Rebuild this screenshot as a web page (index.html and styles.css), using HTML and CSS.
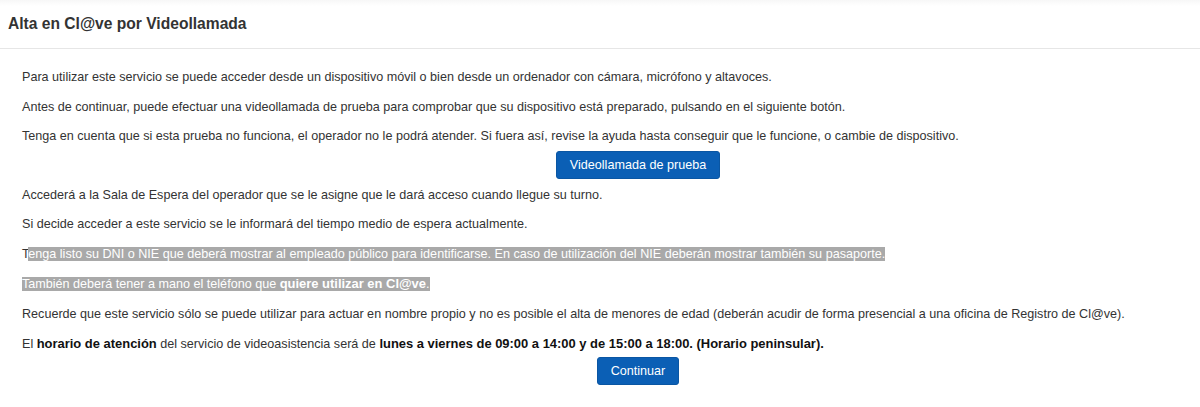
FILE: index.html
```html
<!DOCTYPE html>
<html lang="es">
<head>
    <meta charset="UTF-8">
    <meta name="viewport" content="width=device-width, initial-scale=1.0">
    <title>Alta en Cl@ve por Videollamada</title>
    <link rel="stylesheet" href="styles.css">
</head>
<body>
    <div class="panel">
        <div class="panel-heading">
            <h1>Alta en Cl@ve por Videollamada</h1>
        </div>
        <div class="panel-body">
            <p>Para utilizar este servicio se puede acceder desde un dispositivo móvil o bien desde un ordenador con cámara, micrófono y altavoces.</p>
            <p>Antes de continuar, puede efectuar una videollamada de prueba para comprobar que su dispositivo está preparado, pulsando en el siguiente botón.</p>
            <p>Tenga en cuenta que si esta prueba no funciona, el operador no le podrá atender. Si fuera así, revise la ayuda hasta conseguir que le funcione, o cambie de dispositivo.</p>
            <div class="actions">
                <button class="btn" id="testBtn">Videollamada de prueba</button>
            </div>
            <p>Accederá a la Sala de Espera del operador que se le asigne que le dará acceso cuando llegue su turno.</p>
            <p>Si decide acceder a este servicio se le informará del tiempo medio de espera actualmente.</p>
            <p>T<span class="sel">enga listo su DNI o NIE que deberá mostrar al empleado público para identificarse. En caso de utilización del NIE deberán mostrar también su pasaporte. </span></p>
            <p><span class="sel">También deberá tener a mano el teléfono que <strong>quiere utilizar en Cl@ve</strong>.</span></p>
            <p>Recuerde que este servicio sólo se puede utilizar para actuar en nombre propio y no es posible el alta de menores de edad (deberán acudir de forma presencial a una oficina de Registro de Cl@ve).</p>
            <p>El <strong>horario de atención</strong> del servicio de videoasistencia será de <strong>lunes a viernes de 09:00 a 14:00 y de 15:00 a 18:00. (Horario peninsular).</strong></p>
            <div class="actions actions-last">
                <button class="btn" id="continueBtn">Continuar</button>
            </div>
        </div>
    </div>
</body>
</html>
```

FILE: styles.css
```css
body {
    font-family: "Liberation Sans", Arial, sans-serif;
    font-size: 12.6px;
    line-height: 19.5px;
    color: #333;
    background: #fff;
    margin: 0;
}

.panel-heading {
    padding: 0 8px;
    height: 48px;
    display: flex;
    align-items: center;
    border-bottom: 1px solid #e6e6e6;
    background: linear-gradient(#f7f7f7, #fff 6px);
}

.panel-heading h1 {
    margin: 0;
    font-size: 15.6px;
    font-weight: bold;
    color: #333;
}

.panel-body {
    padding: 19px 22px;
}

p {
    margin: 0 0 10px;
}

strong {
    color: #111;
    font-size: 12.95px;
}

.sel {
    background: #a9a9a9;
    color: #fff;
}

.sel strong {
    color: #fff;
}

.actions {
    display: flex;
    justify-content: center;
    padding-left: 76px;
    margin: -6px 0 7px;
}

.actions-last {
    margin-top: -8px;
}

.btn {
    font-family: inherit;
    font-size: 12.6px;
    line-height: 18px;
    color: #fff;
    background: #0b5fb5;
    border: 1px solid #0a56a3;
    border-radius: 3px;
    padding: 4px 13px;
    cursor: pointer;
}
```
